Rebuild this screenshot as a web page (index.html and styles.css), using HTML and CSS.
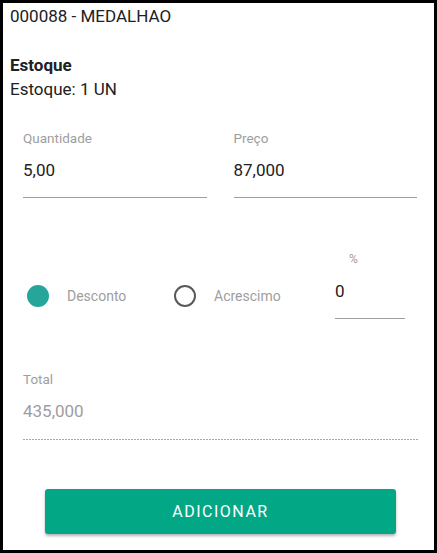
FILE: index.html
```html
<!DOCTYPE html>
<html>

<head>
  <meta name="viewport" content="width=device-width, initial-scale=1.0" />
  <title>Adicionar item</title>
  <link rel="stylesheet" href="styles.css">
</head>

<body>
  <div class="frame">
    <div class="header">
      <div class="title">000088 - MEDALHAO</div>
      <div class="stock">
        <div class="stock-title">Estoque</div>
        <div>Estoque: 1 UN</div>
      </div>
    </div>

    <div class="fields">
      <div class="field">
        <div class="label">Quantidade</div>
        <div class="value">5,00</div>
      </div>
      <div class="field">
        <div class="label">Preço</div>
        <div class="value">87,000</div>
      </div>
    </div>

    <div class="options">
      <div class="option first">
        <span class="radio checked"></span>
        <span class="option-text">Desconto</span>
      </div>
      <div class="option second">
        <span class="radio"></span>
        <span class="option-text">Acrescimo</span>
      </div>
      <div class="field percent">
        <div class="label small">%</div>
        <div class="value">0</div>
      </div>
    </div>

    <div class="field total">
      <div class="label">Total</div>
      <div class="value disabled">435,000</div>
    </div>

    <div class="actions">
      <button class="add">ADICIONAR</button>
    </div>
  </div>
</body>

</html>
```

FILE: styles.css
```css
html, body {
  margin: 0px;
  padding: 0px;
  background-color: white;
}

.frame {
  width: 437px;
  height: 553px;
  box-sizing: border-box;
  border: 3px solid black;
  font-family: Roboto, "Noto Sans", sans-serif;
  color: #212121;
}

.header {
  padding: 3px 7px 0px;
  font-size: 17px;
}

.title {
  line-height: 20px;
}

.stock {
  margin-top: 27px;
  line-height: 24px;
}

.stock-title {
  font-weight: bold;
}

.fields {
  display: flex;
  gap: 27px;
  padding: 0px 17px 0px 20px;
  margin-top: 29px;
}

.fields .field {
  flex: 1;
}

.label {
  font-size: 13.5px;
  line-height: 16px;
  color: #9e9e9e;
}

.label.small {
  font-size: 12px;
  line-height: 14px;
  padding-left: 14px;
}

.value {
  font-size: 17px;
  line-height: 20px;
  margin-top: 14px;
  padding-bottom: 17px;
  border-bottom: 1px solid #9e9e9e;
}

.options {
  display: flex;
  align-items: flex-start;
  padding-left: 24px;
  margin-top: 54px;
}

.option {
  display: flex;
  align-items: center;
  margin-top: 33px;
  font-size: 14px;
  color: #9e9e9e;
}

.option.first {
  width: 147px;
}

.option.second {
  width: 161px;
}

.radio {
  width: 22px;
  height: 22px;
  box-sizing: border-box;
  border-radius: 50%;
  border: 2px solid #595959;
  margin-right: 18px;
}

.radio.checked {
  border: none;
  background-color: #26a69a;
}

.percent {
  width: 70px;
}

.percent .value {
  margin-top: 15px;
}

.total {
  padding: 0px 16px 0px 20px;
  margin-top: 52px;
}

.total .value {
  margin-top: 14px;
  padding-bottom: 19px;
  border-bottom: none;
  background-image: linear-gradient(to right, #a8a8a8 2px, transparent 2px);
  background-size: 3px 1px;
  background-repeat: repeat-x;
  background-position: left bottom;
}

.value.disabled {
  color: #9e9e9e;
}

.actions {
  display: flex;
  justify-content: center;
  padding-left: 4px;
  margin-top: 49px;
}

.add {
  width: 351px;
  height: 45px;
  border: none;
  border-radius: 3px;
  background-color: #02a886;
  color: white;
  font-family: Roboto, sans-serif;
  font-size: 16px;
  letter-spacing: 1.5px;
  box-shadow: 0px 2px 3px rgba(0, 0, 0, 0.3);
}
```
